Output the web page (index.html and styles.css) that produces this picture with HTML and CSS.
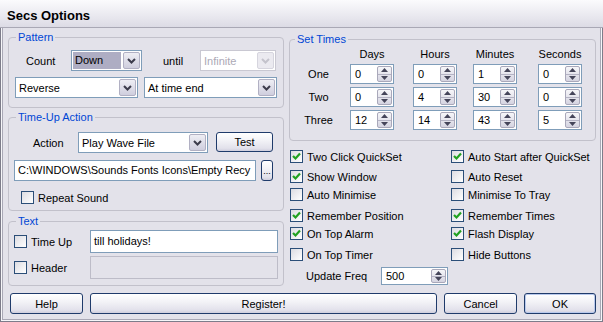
FILE: index.html
```html
<!DOCTYPE html>
<html lang="en">
<head>
    <meta charset="UTF-8">
    <title>Secs Options</title>
    <link rel="stylesheet" href="styles.css">
</head>
<body>
    <div class="window">
        <div class="titlebar">Secs Options</div>
        <div class="client">
            <div class="main">
                <div class="left">
                    <fieldset class="group pattern">
                        <legend>Pattern</legend>
                        <div class="row">
                            <span class="lbl lbl-count">Count</span>
                            <div class="combo w-down">
                                <span class="combo-text sel">Down</span>
                                <span class="drop"><svg width="9" height="6" viewBox="0 0 9 6"><polyline points="1,1 4.5,4.5 8,1" fill="none" stroke="#3c3c4c" stroke-width="2"/></svg></span>
                            </div>
                            <span class="lbl lbl-until">until</span>
                            <div class="combo w-inf disabled">
                                <span class="combo-text">Infinite</span>
                                <span class="drop"><svg width="9" height="6" viewBox="0 0 9 6"><polyline points="1,1 4.5,4.5 8,1" fill="none" stroke="#c4c3cc" stroke-width="2"/></svg></span>
                            </div>
                        </div>
                        <div class="row row-2">
                            <div class="combo w-rev">
                                <span class="combo-text">Reverse</span>
                                <span class="drop"><svg width="9" height="6" viewBox="0 0 9 6"><polyline points="1,1 4.5,4.5 8,1" fill="none" stroke="#3c3c4c" stroke-width="2"/></svg></span>
                            </div>
                            <div class="combo w-end">
                                <span class="combo-text">At time end</span>
                                <span class="drop"><svg width="9" height="6" viewBox="0 0 9 6"><polyline points="1,1 4.5,4.5 8,1" fill="none" stroke="#3c3c4c" stroke-width="2"/></svg></span>
                            </div>
                        </div>
                    </fieldset>

                    <fieldset class="group timeup">
                        <legend>Time-Up Action</legend>
                        <div class="row">
                            <span class="lbl lbl-action">Action</span>
                            <div class="combo w-action">
                                <span class="combo-text">Play Wave File</span>
                                <span class="drop"><svg width="9" height="6" viewBox="0 0 9 6"><polyline points="1,1 4.5,4.5 8,1" fill="none" stroke="#3c3c4c" stroke-width="2"/></svg></span>
                            </div>
                            <button class="btn btn-test">Test</button>
                        </div>
                        <div class="row row-path">
                            <div class="field w-path">C:\WINDOWS\Sounds Fonts Icons\Empty Recy</div>
                            <button class="btn btn-browse">...</button>
                        </div>
                        <div class="check-row repeat">
                            <span class="check"></span>
                            <span>Repeat Sound</span>
                        </div>
                    </fieldset>

                    <fieldset class="group text">
                        <legend>Text</legend>
                        <div class="row">
                            <div class="check-row text-check">
                                <span class="check"></span>
                                <span>Time Up</span>
                            </div>
                            <div class="field tall">till holidays!</div>
                        </div>
                        <div class="row row-header">
                            <div class="check-row text-check">
                                <span class="check"></span>
                                <span>Header</span>
                            </div>
                            <div class="field tall disabled"></div>
                        </div>
                    </fieldset>
                </div>

                <div class="right">
                    <fieldset class="group times">
                        <legend>Set Times</legend>
                        <div class="times-grid">
                            <span></span>
                            <span class="col-head">Days</span>
                            <span class="col-head">Hours</span>
                            <span class="col-head">Minutes</span>
                            <span class="col-head">Seconds</span>

                            <span class="row-head">One</span>
                            <div class="spin"><span class="spin-val">0</span><span class="spin-btns"><span class="spin-up"><svg width="7" height="4" viewBox="0 0 7 4"><polygon points="0,4 3.5,0 7,4" fill="#45455a"/></svg></span><span class="spin-down"><svg width="7" height="4" viewBox="0 0 7 4"><polygon points="0,0 3.5,4 7,0" fill="#45455a"/></svg></span></span></div>
                            <div class="spin"><span class="spin-val">0</span><span class="spin-btns"><span class="spin-up"><svg width="7" height="4" viewBox="0 0 7 4"><polygon points="0,4 3.5,0 7,4" fill="#45455a"/></svg></span><span class="spin-down"><svg width="7" height="4" viewBox="0 0 7 4"><polygon points="0,0 3.5,4 7,0" fill="#45455a"/></svg></span></span></div>
                            <div class="spin"><span class="spin-val">1</span><span class="spin-btns"><span class="spin-up"><svg width="7" height="4" viewBox="0 0 7 4"><polygon points="0,4 3.5,0 7,4" fill="#45455a"/></svg></span><span class="spin-down"><svg width="7" height="4" viewBox="0 0 7 4"><polygon points="0,0 3.5,4 7,0" fill="#45455a"/></svg></span></span></div>
                            <div class="spin"><span class="spin-val">0</span><span class="spin-btns"><span class="spin-up"><svg width="7" height="4" viewBox="0 0 7 4"><polygon points="0,4 3.5,0 7,4" fill="#45455a"/></svg></span><span class="spin-down"><svg width="7" height="4" viewBox="0 0 7 4"><polygon points="0,0 3.5,4 7,0" fill="#45455a"/></svg></span></span></div>

                            <span class="row-head">Two</span>
                            <div class="spin"><span class="spin-val">0</span><span class="spin-btns"><span class="spin-up"><svg width="7" height="4" viewBox="0 0 7 4"><polygon points="0,4 3.5,0 7,4" fill="#45455a"/></svg></span><span class="spin-down"><svg width="7" height="4" viewBox="0 0 7 4"><polygon points="0,0 3.5,4 7,0" fill="#45455a"/></svg></span></span></div>
                            <div class="spin"><span class="spin-val">4</span><span class="spin-btns"><span class="spin-up"><svg width="7" height="4" viewBox="0 0 7 4"><polygon points="0,4 3.5,0 7,4" fill="#45455a"/></svg></span><span class="spin-down"><svg width="7" height="4" viewBox="0 0 7 4"><polygon points="0,0 3.5,4 7,0" fill="#45455a"/></svg></span></span></div>
                            <div class="spin"><span class="spin-val">30</span><span class="spin-btns"><span class="spin-up"><svg width="7" height="4" viewBox="0 0 7 4"><polygon points="0,4 3.5,0 7,4" fill="#45455a"/></svg></span><span class="spin-down"><svg width="7" height="4" viewBox="0 0 7 4"><polygon points="0,0 3.5,4 7,0" fill="#45455a"/></svg></span></span></div>
                            <div class="spin"><span class="spin-val">0</span><span class="spin-btns"><span class="spin-up"><svg width="7" height="4" viewBox="0 0 7 4"><polygon points="0,4 3.5,0 7,4" fill="#45455a"/></svg></span><span class="spin-down"><svg width="7" height="4" viewBox="0 0 7 4"><polygon points="0,0 3.5,4 7,0" fill="#45455a"/></svg></span></span></div>

                            <span class="row-head">Three</span>
                            <div class="spin"><span class="spin-val">12</span><span class="spin-btns"><span class="spin-up"><svg width="7" height="4" viewBox="0 0 7 4"><polygon points="0,4 3.5,0 7,4" fill="#45455a"/></svg></span><span class="spin-down"><svg width="7" height="4" viewBox="0 0 7 4"><polygon points="0,0 3.5,4 7,0" fill="#45455a"/></svg></span></span></div>
                            <div class="spin"><span class="spin-val">14</span><span class="spin-btns"><span class="spin-up"><svg width="7" height="4" viewBox="0 0 7 4"><polygon points="0,4 3.5,0 7,4" fill="#45455a"/></svg></span><span class="spin-down"><svg width="7" height="4" viewBox="0 0 7 4"><polygon points="0,0 3.5,4 7,0" fill="#45455a"/></svg></span></span></div>
                            <div class="spin"><span class="spin-val">43</span><span class="spin-btns"><span class="spin-up"><svg width="7" height="4" viewBox="0 0 7 4"><polygon points="0,4 3.5,0 7,4" fill="#45455a"/></svg></span><span class="spin-down"><svg width="7" height="4" viewBox="0 0 7 4"><polygon points="0,0 3.5,4 7,0" fill="#45455a"/></svg></span></span></div>
                            <div class="spin"><span class="spin-val">5</span><span class="spin-btns"><span class="spin-up"><svg width="7" height="4" viewBox="0 0 7 4"><polygon points="0,4 3.5,0 7,4" fill="#45455a"/></svg></span><span class="spin-down"><svg width="7" height="4" viewBox="0 0 7 4"><polygon points="0,0 3.5,4 7,0" fill="#45455a"/></svg></span></span></div>
                        </div>
                    </fieldset>

                    <div class="options">
                        <div class="check-row"><span class="check on"><svg width="11" height="11" viewBox="0 0 11 11"><polyline points="2,5 4.5,7.5 9,2.5" fill="none" stroke="#21a121" stroke-width="2.2"/></svg></span><span>Two Click QuickSet</span></div>
                        <div class="check-row"><span class="check on"><svg width="11" height="11" viewBox="0 0 11 11"><polyline points="2,5 4.5,7.5 9,2.5" fill="none" stroke="#21a121" stroke-width="2.2"/></svg></span><span>Auto Start after QuickSet</span></div>
                        <div class="check-row"><span class="check on"><svg width="11" height="11" viewBox="0 0 11 11"><polyline points="2,5 4.5,7.5 9,2.5" fill="none" stroke="#21a121" stroke-width="2.2"/></svg></span><span>Show Window</span></div>
                        <div class="check-row"><span class="check"></span><span>Auto Reset</span></div>
                        <div class="check-row"><span class="check"></span><span>Auto Minimise</span></div>
                        <div class="check-row"><span class="check"></span><span>Minimise To Tray</span></div>
                        <div class="check-row"><span class="check on"><svg width="11" height="11" viewBox="0 0 11 11"><polyline points="2,5 4.5,7.5 9,2.5" fill="none" stroke="#21a121" stroke-width="2.2"/></svg></span><span>Remember Position</span></div>
                        <div class="check-row"><span class="check on"><svg width="11" height="11" viewBox="0 0 11 11"><polyline points="2,5 4.5,7.5 9,2.5" fill="none" stroke="#21a121" stroke-width="2.2"/></svg></span><span>Remember Times</span></div>
                        <div class="check-row"><span class="check on"><svg width="11" height="11" viewBox="0 0 11 11"><polyline points="2,5 4.5,7.5 9,2.5" fill="none" stroke="#21a121" stroke-width="2.2"/></svg></span><span>On Top Alarm</span></div>
                        <div class="check-row"><span class="check on"><svg width="11" height="11" viewBox="0 0 11 11"><polyline points="2,5 4.5,7.5 9,2.5" fill="none" stroke="#21a121" stroke-width="2.2"/></svg></span><span>Flash Display</span></div>
                        <div class="check-row"><span class="check"></span><span>On Top Timer</span></div>
                        <div class="check-row"><span class="check"></span><span>Hide Buttons</span></div>
                    </div>

                    <div class="row update-row">
                        <span class="lbl lbl-freq">Update Freq</span>
                        <div class="spin spin-freq"><span class="spin-val">500</span><span class="spin-btns"><span class="spin-up"><svg width="7" height="4" viewBox="0 0 7 4"><polygon points="0,4 3.5,0 7,4" fill="#45455a"/></svg></span><span class="spin-down"><svg width="7" height="4" viewBox="0 0 7 4"><polygon points="0,0 3.5,4 7,0" fill="#45455a"/></svg></span></span></div>
                    </div>
                </div>
            </div>

            <div class="buttons">
                <button class="btn btn-help">Help</button>
                <button class="btn btn-register">Register!</button>
                <button class="btn btn-cancel">Cancel</button>
                <button class="btn btn-ok">OK</button>
            </div>
        </div>
    </div>
</body>
</html>
```

FILE: styles.css
```css
body {
    margin: 0;
    font-family: 'Liberation Sans', Arial, sans-serif;
    font-size: 11px;
    color: #000;
}
.window {
    width: 603px;
    height: 322px;
    display: flex;
    flex-direction: column;
    background-color: #e3e2ea;
    overflow: hidden;
}
.titlebar {
    height: 28px;
    box-sizing: border-box;
    padding-left: 7px;
    font-size: 13px;
    font-weight: bold;
    line-height: 31px;
    background: linear-gradient(#fbfbfd, #e9e8ef 60%, #dcdbe5);
    border-bottom: 1px solid #a9a8b5;
}
.client {
    flex: 1;
    display: flex;
    flex-direction: column;
    padding: 3px 6px 7px 7px;
    border: 1px solid #7d7c8a;
    border-top: none;
    box-shadow: inset 1px 0 #f6f6f9, inset -1px 0 #f6f6f9, inset 0 -1px #f6f6f9,
                inset 2px 0 #a9a8b6, inset -2px 0 #a9a8b6, inset 0 -2px #a9a8b6;
}
.main {
    display: flex;
    gap: 5px;
}
.left {
    width: 276px;
    display: flex;
    flex-direction: column;
}
.right {
    width: 307px;
    display: flex;
    flex-direction: column;
}

/* group boxes */
.group {
    margin: 0;
    min-width: 0;
    border: 1px solid #c2c1cb;
    border-radius: 4px;
    padding: 0 4px 6px 5px;
}
.group legend {
    padding: 0 2px;
    margin-left: 2px;
    line-height: 13px;
    color: #0046d5;
}
.pattern {
    padding: 6px 5px 9px 6px;
}
.pattern legend {
    margin-left: 1px;
}
.timeup {
    margin-top: 3px;
    padding-top: 8px;
}
.text {
    margin-top: 4px;
    padding-top: 2px;
}
.times {
    margin-top: 2px;
    padding: 2px 4px 10px 5px;
}
.times legend {
    margin-left: 0;
}

.row {
    display: flex;
    align-items: center;
}
.row-2 {
    margin-top: 6px;
    gap: 6px;
}
.lbl {
    box-sizing: border-box;
}
.lbl-count {
    width: 56px;
    padding-left: 11px;
}
.lbl-until {
    width: 58px;
    padding-left: 21px;
}
.lbl-action {
    width: 64px;
    padding-left: 19px;
}

/* combo boxes */
.combo {
    height: 21px;
    box-sizing: border-box;
    border: 1px solid #7f9db9;
    background-color: #fff;
    display: flex;
    align-items: center;
}
.combo-text {
    flex: 1;
    padding-left: 3px;
    white-space: nowrap;
    overflow: hidden;
}
.combo-text.sel {
    margin: 1px;
    padding-left: 2px;
    height: 17px;
    line-height: 17px;
    background-color: #aeadc3;
}
.drop {
    width: 15px;
    height: 15px;
    margin: 1px;
    border: 1px solid #b1b0c3;
    border-radius: 2px;
    background: linear-gradient(#eeeef4, #cfcede);
    display: flex;
    align-items: center;
    justify-content: center;
}
.combo.disabled {
    border-color: #c9c8d2;
    color: #aca9b6;
}
.combo.disabled .drop {
    border-color: #d6d5de;
    background: #ebeaf0;
}
.w-down { width: 71px; }
.w-inf { width: 76px; }
.w-rev { width: 123px; }
.w-end { width: 133px; }
.w-action { width: 130px; }

/* text fields */
.field {
    box-sizing: border-box;
    height: 21px;
    line-height: 19px;
    padding-left: 3px;
    border: 1px solid #7f9db9;
    background-color: #fff;
    white-space: nowrap;
    overflow: hidden;
}
.field.tall {
    width: 188px;
    height: 23px;
    line-height: 21px;
}
.field.disabled {
    border-color: #bdbcc8;
    background-color: #e3e2ea;
}
.w-path {
    width: 242px;
}
.row-path {
    margin-top: 7px;
    gap: 5px;
}
.row-header {
    margin-top: 3px;
}

/* buttons */
.btn {
    box-sizing: border-box;
    height: 21px;
    padding: 0;
    font-family: inherit;
    font-size: 11px;
    color: #000;
    border: 1px solid #1f3b6b;
    border-radius: 3px;
    background: linear-gradient(#ffffff, #f3f3f7 40%, #e2e1eb 85%, #cfcedd);
}
.btn-test {
    width: 57px;
    height: 20px;
    margin-left: 8px;
    align-self: flex-start;
}
.btn-browse {
    width: 12px;
    font-size: 9px;
    line-height: 12px;
    overflow: hidden;
}
.btn-ok {
    box-shadow: inset 0 0 0 1px #b9c9ec;
}

/* checkboxes */
.check-row {
    display: flex;
    align-items: center;
    gap: 4px;
    height: 13px;
    white-space: nowrap;
}
.check {
    width: 13px;
    height: 13px;
    box-sizing: border-box;
    border: 1px solid #2b4e78;
    background: linear-gradient(135deg, #dcdce2, #ffffff);
    display: flex;
    align-items: center;
    justify-content: center;
    flex-shrink: 0;
}
.repeat {
    margin-top: 10px;
    margin-left: 7px;
}
.text-check {
    width: 76px;
}

/* set times */
.times-grid {
    display: grid;
    grid-template-columns: 55px 63px 60px 65px 44px;
    grid-template-rows: 13px 20px 20px 20px;
    row-gap: 3px;
    align-items: center;
}
.col-head {
    text-align: center;
    width: 44px;
    margin-bottom: 2px;
    align-self: start;
}
.row-head {
    text-align: center;
    padding-right: 8px;
}
.spin {
    box-sizing: border-box;
    width: 44px;
    height: 20px;
    border: 1px solid #7f9db9;
    background-color: #fff;
    display: flex;
}
.spin-val {
    flex: 1;
    padding-left: 4px;
    line-height: 18px;
}
.spin-btns {
    width: 15px;
    margin: 1px;
    box-sizing: border-box;
    border: 1px solid #a9a8ba;
    border-radius: 2px;
    background: linear-gradient(#f6f6f9, #d5d4e1);
    display: flex;
    flex-direction: column;
}
.spin-up, .spin-down {
    flex: 1;
    display: flex;
    align-items: center;
    justify-content: center;
}
.spin-up {
    border-bottom: 1px solid #b4b3c4;
}

/* options */
.options {
    margin-top: 9px;
    padding-left: 1px;
    display: grid;
    grid-template-columns: 161px 1fr;
    grid-template-rows: 20px 18px 21px 18px 21px 13px;
    align-items: start;
}
.update-row {
    margin-top: 6px;
}
.lbl-freq {
    width: 92px;
    padding-left: 17px;
}
.spin-freq {
    width: 67px;
    height: 18px;
}
.spin-freq .spin-val {
    line-height: 16px;
}

.buttons {
    margin-top: 7px;
    padding-left: 2px;
    display: flex;
    gap: 7px;
}
.btn-help { width: 73px; }
.btn-register { width: 348px; }
.btn-cancel { width: 73px; }
.btn-ok { width: 72px; }
```
